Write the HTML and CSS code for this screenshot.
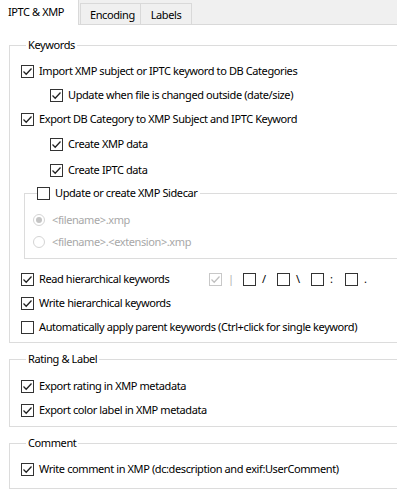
FILE: index.html
```html
<!DOCTYPE html>
<html lang="en">
<head>
    <meta charset="UTF-8">
    <meta name="viewport" content="width=device-width, initial-scale=1.0">
    <title>IPTC &amp; XMP</title>
    <link rel="stylesheet" href="styles.css">
</head>
<body>
    <div class="tabs">
        <div class="tab active">IPTC &amp; XMP</div>
        <div class="tab">Encoding</div>
        <div class="tab">Labels</div>
    </div>

    <div class="panel">
        <!-- Keywords -->
        <fieldset class="group keywords">
            <legend>Keywords</legend>
            <div class="row"><span class="box on"><svg viewBox="0 0 13 13"><path d="M2.5 6.5 L5.2 9.2 L10.5 3.5"/></svg></span>Import XMP subject or IPTC keyword to DB Categories</div>
            <div class="row indent"><span class="box on"><svg viewBox="0 0 13 13"><path d="M2.5 6.5 L5.2 9.2 L10.5 3.5"/></svg></span>Update when file is changed outside (date/size)</div>
            <div class="row"><span class="box on"><svg viewBox="0 0 13 13"><path d="M2.5 6.5 L5.2 9.2 L10.5 3.5"/></svg></span>Export DB Category to XMP Subject and IPTC Keyword</div>
            <div class="row indent r4"><span class="box on"><svg viewBox="0 0 13 13"><path d="M2.5 6.5 L5.2 9.2 L10.5 3.5"/></svg></span>Create XMP data</div>
            <div class="row indent r5"><span class="box on"><svg viewBox="0 0 13 13"><path d="M2.5 6.5 L5.2 9.2 L10.5 3.5"/></svg></span>Create IPTC data</div>

            <fieldset class="group sidecar">
                <legend><span class="box"></span>Update or create XMP Sidecar</legend>
                <div class="row radio-row disabled"><span class="radio on"></span>&lt;filename&gt;.xmp</div>
                <div class="row radio-row disabled"><span class="radio"></span>&lt;filename&gt;.&lt;extension&gt;.xmp</div>
            </fieldset>

            <div class="row r6">
                <span class="box on"><svg viewBox="0 0 13 13"><path d="M2.5 6.5 L5.2 9.2 L10.5 3.5"/></svg></span>
                <span class="label-fixed">Read hierarchical keywords</span>
                <div class="seps">
                    <div class="sep"><span class="box on disabled"><svg viewBox="0 0 13 13"><path d="M2.5 6.5 L5.2 9.2 L10.5 3.5"/></svg></span><span class="sep-char light">|</span></div>
                    <div class="sep"><span class="box"></span><span class="sep-char">/</span></div>
                    <div class="sep"><span class="box"></span><span class="sep-char">\</span></div>
                    <div class="sep"><span class="box"></span><span class="sep-char">:</span></div>
                    <div class="sep"><span class="box"></span><span class="sep-char">.</span></div>
                </div>
            </div>
            <div class="row"><span class="box on"><svg viewBox="0 0 13 13"><path d="M2.5 6.5 L5.2 9.2 L10.5 3.5"/></svg></span>Write hierarchical keywords</div>
            <div class="row"><span class="box"></span>Automatically apply parent keywords (Ctrl+click for single keyword)</div>
        </fieldset>

        <!-- Rating & Label -->
        <fieldset class="group rating">
            <legend>Rating &amp; Label</legend>
            <div class="row"><span class="box on"><svg viewBox="0 0 13 13"><path d="M2.5 6.5 L5.2 9.2 L10.5 3.5"/></svg></span>Export rating in XMP metadata</div>
            <div class="row"><span class="box on"><svg viewBox="0 0 13 13"><path d="M2.5 6.5 L5.2 9.2 L10.5 3.5"/></svg></span>Export color label in XMP metadata</div>
        </fieldset>

        <!-- Comment -->
        <fieldset class="group comment">
            <legend>Comment</legend>
            <div class="row"><span class="box on"><svg viewBox="0 0 13 13"><path d="M2.5 6.5 L5.2 9.2 L10.5 3.5"/></svg></span>Write comment in XMP (dc:description and exif:UserComment)</div>
        </fieldset>
    </div>
</body>
</html>
```

FILE: styles.css
```css
body {
    margin: 0;
    padding: 0;
    background-color: #f0f0f0;
    font-family: "Noto Sans", "Open Sans", sans-serif;
    font-size: 11px;
    line-height: 14px;
    letter-spacing: -0.4px;
    color: #000;
    overflow: hidden;
    height: 494px;
}

/* tab strip */
.tabs {
    display: flex;
    align-items: flex-end;
    height: 24px;
    border-bottom: 1px solid #d9d9d9;
}
.tab {
    height: 21px;
    line-height: 21px;
    padding: 0 9px;
    background-color: #f0f0f0;
    border: 1px solid #d9d9d9;
    border-bottom: none;
    margin-left: -1px;
    box-sizing: border-box;
}
.tab:nth-child(2) {
    width: 61px;
    margin-left: 1px;
    text-align: center;
}
.tab:nth-child(3) {
    width: 52px;
    text-align: center;
}
.tab.active {
    width: 79px;
    height: 25px;
    line-height: 24px;
    margin: 0 0 -1px 0;
    padding-left: 8px;
    background-color: #fff;
    border-left: none;
    border-top: none;
    position: relative;
}

/* white page */
.panel {
    background-color: #fff;
    padding-top: 13px;
    height: 469px;
    box-sizing: border-box;
    overflow: hidden;
}

.group {
    border: 1px solid #dcdcdc;
    margin: 0 -20px 0 9px;
    padding: 0 0 0 11px;
    min-width: 0;
}
.group legend {
    padding: 0 2px;
    margin-left: 5px;
    line-height: 14px;
    height: 14px;
}

.keywords {
    padding-top: 7px;
    padding-bottom: 3px;
}
.rating {
    margin-top: 9px;
    padding-top: 8px;
    padding-bottom: 4px;
}
.comment {
    margin-top: 9px;
    padding-top: 7px;
    padding-bottom: 7px;
}

.row {
    display: flex;
    align-items: center;
    height: 24px;
    white-space: nowrap;
}
.row.indent {
    margin-left: 29px;
}
.row.r4 {
    margin-top: 1px;
}
.row.r5 {
    margin-top: 2px;
}
.row.r6 {
    margin-top: 8px;
}

/* checkboxes */
.box {
    display: inline-block;
    flex: none;
    width: 13px;
    height: 13px;
    border: 1px solid #333;
    box-sizing: border-box;
    background-color: #fff;
    margin-right: 5px;
    position: relative;
}
.box svg {
    position: absolute;
    left: -1px;
    top: -1px;
    width: 13px;
    height: 13px;
}
.box svg path {
    fill: none;
    stroke: #222;
    stroke-width: 1.3;
}
.box.disabled {
    border-color: #c8c8c8;
}
.box.disabled svg path {
    stroke: #c0c0c0;
}

/* xmp sidecar sub group */
.sidecar {
    margin: 4px -20px 0 3px;
    padding: 0 0 5px 8px;
}
.sidecar legend {
    display: flex;
    align-items: center;
    margin-left: 4px;
    padding: 0 3px 0 0;
}
.radio-row {
    height: 22px;
}
.sidecar .radio-row:first-of-type {
    margin-top: 9px;
}
.disabled {
    color: #a8a8a8;
}
.radio {
    display: inline-block;
    flex: none;
    width: 12px;
    height: 12px;
    border: 1px solid #d4d4d4;
    border-radius: 50%;
    box-sizing: border-box;
    margin-right: 7px;
    position: relative;
}
.radio.on::after {
    content: "";
    position: absolute;
    left: 2px;
    top: 2px;
    width: 6px;
    height: 6px;
    border-radius: 50%;
    background-color: #c4c4c4;
}

/* hierarchy separators */
.label-fixed {
    width: 170px;
}
.seps {
    display: flex;
}
.sep {
    display: flex;
    align-items: center;
    width: 34px;
}
.sep .box {
    margin-right: 6px;
}
.sep-char.light {
    color: #b0b0b0;
}
```
